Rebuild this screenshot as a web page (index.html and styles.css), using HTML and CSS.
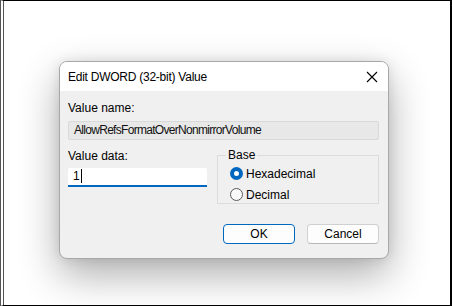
FILE: index.html
```html
<!doctype html>
<html lang="en">
  <head>
    <meta charset="UTF-8" />
    <meta name="viewport" content="width=device-width, initial-scale=1.0" />
    <title>Edit DWORD (32-bit) Value</title>
    <link rel="stylesheet" href="styles.css">
  </head>
  <body>
    <div class="screen">
      <div class="dialog">
        <div class="titlebar">
          <span class="title">Edit DWORD (32-bit) Value</span>
          <svg class="close" width="12" height="12" viewBox="0 0 12 12">
            <path d="M1 1 L11 11 M11 1 L1 11" stroke="#000" stroke-width="1.1" />
          </svg>
        </div>
        <div class="content">
          <div class="label">Value name:</div>
          <div class="name-field">AllowRefsFormatOverNonmirrorVolume</div>
          <div class="row">
            <div class="data">
              <div class="label">Value data:</div>
              <div class="data-field">1<span class="caret"></span></div>
            </div>
            <fieldset class="base">
              <legend>Base</legend>
              <label class="radio">
                <span class="dot checked"></span>
                <span>Hexadecimal</span>
              </label>
              <label class="radio">
                <span class="dot"></span>
                <span>Decimal</span>
              </label>
            </fieldset>
          </div>
          <div class="buttons">
            <button class="btn default">OK</button>
            <button class="btn">Cancel</button>
          </div>
        </div>
      </div>
    </div>
  </body>
</html>
```

FILE: styles.css
```css
* {
  box-sizing: border-box;
}

body {
  margin: 0;
  background: #fff;
  font-family: "Liberation Sans", Arial, sans-serif;
  font-size: 12px;
  color: #000;
}

.screen {
  width: 452px;
  height: 306px;
  border-top: 1px solid #000;
  border-right: 2px solid #000;
  border-bottom: 1px solid #000;
  border-left: 4px double #555;
  padding: 60px 0 0 55px;
}

.dialog {
  width: 330px;
  height: 198px;
  border: 1px solid #a8a8a8;
  border-radius: 8px;
  background: #f0f0f0;
  overflow: hidden;
  box-shadow: 0 16px 40px rgba(0, 0, 0, 0.32), 0 0 12px rgba(0, 0, 0, 0.1);
}

.titlebar {
  height: 29px;
  background: #fff;
  display: flex;
  align-items: center;
  justify-content: space-between;
  padding: 0 10px 0 8px;
}

.title {
  letter-spacing: -0.25px;
}

.close {
  display: block;
}

.content {
  padding: 10px 9px 0 8px;
}

.label {
  height: 14px;
  line-height: 14px;
}

.name-field {
  margin-top: 6px;
  height: 19px;
  line-height: 17px;
  padding-left: 5px;
  background: #e8e8e8;
  border: 1px solid #d9d9d9;
  border-radius: 2px;
  color: #111;
  letter-spacing: -0.7px;
}

.row {
  display: flex;
  justify-content: space-between;
  margin-top: 9px;
}

.data {
  width: 139px;
}

.data-field {
  margin-top: 5px;
  height: 19px;
  line-height: 17px;
  padding-left: 5px;
  background: #fff;
  border-bottom: 2px solid #0067c0;
  border-radius: 2px 2px 0 0;
}

.caret {
  display: inline-block;
  width: 1px;
  height: 14px;
  background: #000;
  vertical-align: -3px;
  margin-left: 1px;
}

.base {
  width: 162px;
  height: 55px;
  margin: 0;
  padding: 2px 0 0 12px;
  border: 1px solid #dcdcdc;
}

.base legend {
  padding: 0 2px;
  margin-left: -4px;
  line-height: 12px;
}

.radio {
  display: flex;
  align-items: center;
  gap: 3px;
  height: 21px;
}

.dot {
  width: 13px;
  height: 13px;
  border-radius: 50%;
  border: 1px solid #5a5a5a;
  background: #fafafa;
}

.dot.checked {
  border: 4px solid #0067c0;
  background: #fff;
}

.buttons {
  display: flex;
  justify-content: flex-end;
  gap: 12px;
  margin-top: 20px;
}

.btn {
  width: 72px;
  height: 20px;
  font: inherit;
  color: #000;
  background: #fdfdfd;
  border: 1px solid #d0d0d0;
  border-bottom-color: #b8b8b8;
  border-radius: 4px;
  padding: 0;
}

.btn.default {
  border: 1px solid #0067c0;
}
```
